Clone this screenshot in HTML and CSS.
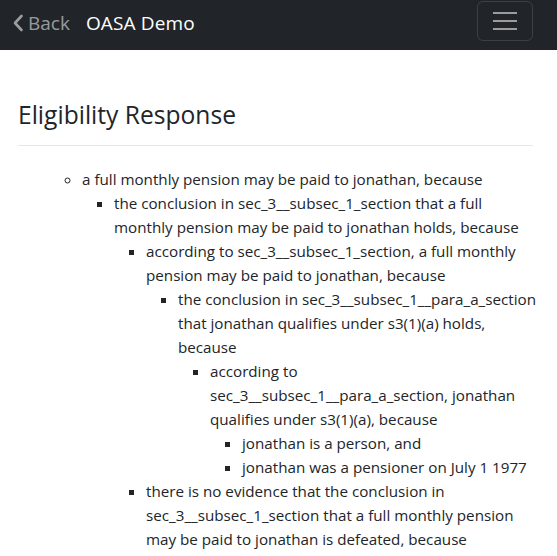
FILE: index.html
```html
<!DOCTYPE html>
<html lang="en">
<head>
<meta charset="utf-8">
<title>OASA Demo</title>
<link rel="stylesheet" href="styles.css">
</head>
<body>
<nav class="navbar">
  <a class="back" href="#">
    <svg class="chev" width="12" height="18" viewBox="0 0 12 18"><path d="M9.5 2 L3 9 L9.5 16" fill="none" stroke="currentColor" stroke-width="2.6" stroke-linecap="round" stroke-linejoin="round"/></svg>
    <span>Back</span>
  </a>
  <span class="brand">OASA Demo</span>
  <button class="toggler" aria-label="menu">
    <span class="bar"></span><span class="bar"></span><span class="bar"></span>
  </button>
</nav>
<main class="container">
  <h3 class="title">Eligibility Response</h3>
  <hr class="rule">
  <ul class="tree root">
    <li class="plain">
      <ul class="tree l1">
        <li>a full monthly pension may be paid to jonathan, because
          <ul class="tree sq">
            <li>the conclusion in sec_3__subsec_1_section that a full monthly pension may be paid to jonathan holds, because
              <ul class="tree sq">
                <li>according to sec_3__subsec_1_section, a full monthly pension may be paid to jonathan, because
                  <ul class="tree sq">
                    <li>the conclusion in sec_3__subsec_1__para_a_section that jonathan qualifies under s3(1)(a) holds, because
                      <ul class="tree sq">
                        <li>according to sec_3__subsec_1__para_a_section, jonathan qualifies under s3(1)(a), because
                          <ul class="tree sq">
                            <li>jonathan is a person, and</li>
                            <li>jonathan was a pensioner on July 1 1977</li>
                          </ul>
                        </li>
                      </ul>
                    </li>
                  </ul>
                </li>
                <li>there is no evidence that the conclusion in sec_3__subsec_1_section that a full monthly pension may be paid to jonathan is defeated, because</li>
              </ul>
            </li>
          </ul>
        </li>
      </ul>
    </li>
  </ul>
</main>
</body>
</html>
```
FILE: styles.css
```css
html, body {
  margin: 0;
  padding: 0;
}
body {
  font-family: "Open Sans", "Noto Sans", sans-serif;
  font-size: 15.2px;
  line-height: 24px;
  color: #212529;
  background: #fff;
}
.navbar {
  height: 50px;
  background: #212529;
  display: flex;
  align-items: center;
  padding: 0 24px 0 12px;
  box-sizing: border-box;
  position: relative;
}
.back {
  display: flex;
  align-items: center;
  gap: 4px;
  color: rgba(255,255,255,0.55);
  text-decoration: none;
  font-size: 19px;
  margin-top: -5px;
}
.brand {
  color: #fff;
  font-size: 19px;
  margin-left: 16px;
  margin-top: -5px;
  letter-spacing: 0.15px;
}
.toggler {
  margin-left: auto;
  width: 56px;
  height: 40px;
  margin-top: -8px;
  border: 1px solid rgba(255,255,255,0.12);
  border-radius: 6px;
  background: transparent;
  display: flex;
  flex-direction: column;
  align-items: center;
  justify-content: center;
  gap: 6px;
  padding: 0;
}
.bar {
  display: block;
  width: 24px;
  height: 2px;
  background: rgba(255,255,255,0.55);
}
.container {
  padding: 0 24px 0 18px;
}
.title {
  margin: 50px 0 0;
  font-size: 24.6px;
  font-weight: 500;
  line-height: 1.2;
}
.rule {
  margin: 15px 0 0;
  border: 0;
  border-top: 1px solid #e6e7e8;
}
.tree {
  margin: 0;
  padding-left: 32px;
}
.root {
  margin-top: 21px;
  margin-right: -6px;
  list-style: none;
}
.l1 { list-style-type: circle; }
.sq { list-style-type: square; }
```
